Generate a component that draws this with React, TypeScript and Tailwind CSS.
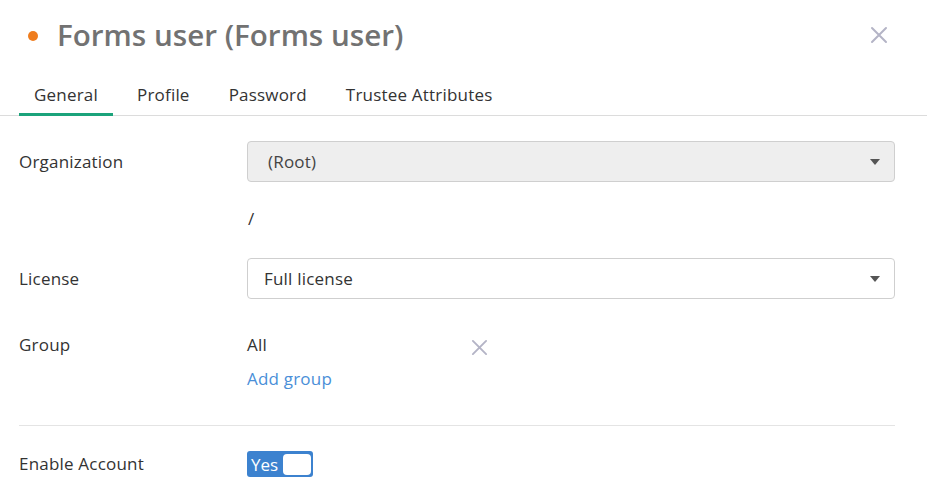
import React from "react";

const font = { fontFamily: '"Open Sans", "Noto Sans", sans-serif' };

function Caret() {
  return (
    <svg width="10" height="6" viewBox="0 0 10 6" className="shrink-0">
      <path d="M0 0h10L5 6z" fill="#555" />
    </svg>
  );
}

function Cross({ size, color }: { size: number; color: string }) {
  return (
    <svg width={size} height={size} viewBox="0 0 18 18" className="shrink-0">
      <path d="M2 2l14 14M16 2L2 16" stroke={color} strokeWidth="2" strokeLinecap="round" />
    </svg>
  );
}

const tabs = ["General", "Profile", "Password", "Trustee Attributes"];

export default function App() {
  return (
    <div className="w-[927px] h-[495px] bg-white overflow-hidden text-[#333] tracking-[0.2px]" style={font}>
      <div className="h-[70px] flex items-center pl-[28px] pr-[39px]">
        <span className="w-[10px] h-[10px] rounded-full bg-[#ef7d1e] mt-[1px]" />
        <h1 className="ml-[19px] text-[29.6px] leading-[40px] font-semibold text-[#727272] flex-1 tracking-normal">
          Forms user (Forms user)
        </h1>
        <Cross size={18} color="#b4b4c6" />
      </div>

      <div className="mt-[8px] flex border-b border-[#dcdcdc] pl-[19px]">
        {tabs.map((t, i) => (
          <div
            key={t}
            className={`px-[15px] mr-[9px] pt-[6px] pb-[7px] -mb-px text-[17px] leading-[22px] border-b-[3px] ${
              i === 0 ? "border-[#1ba37b]" : "border-transparent"
            }`}
          >
            {t}
          </div>
        ))}
      </div>

      <div className="pl-[19px] pr-[32px] text-[17px] leading-[22px]">
        <div className="mt-[25px] grid grid-cols-[228px_1fr] items-center">
          <span>Organization</span>
          <div className="h-[41px] rounded-[4px] border border-[#cfcfcf] bg-[#eeeeee] flex items-center pl-[20px] pr-[14px]">
            <span className="flex-1 text-[#444]">(Root)</span>
            <Caret />
          </div>
        </div>

        <div className="mt-[26px] grid grid-cols-[228px_1fr]">
          <span />
          <span className="pl-px">/</span>
        </div>

        <div className="mt-[28px] grid grid-cols-[228px_1fr] items-center">
          <span>License</span>
          <div className="h-[41px] rounded-[4px] border border-[#cfcfcf] bg-white flex items-center pl-[16px] pr-[14px]">
            <span className="flex-1">Full license</span>
            <Caret />
          </div>
        </div>

        <div className="mt-[35px] grid grid-cols-[228px_1fr]">
          <span>Group</span>
          <div className="flex flex-col">
            <div className="flex items-center">
              <span className="w-[224px]">All</span>
              <span className="mt-[5px]">
                <Cross size={17} color="#b4b4c6" />
              </span>
            </div>
            <span className="mt-[12px] text-[#4a8fd8]">Add group</span>
          </div>
        </div>

        <div className="mt-[35px] border-t border-[#e4e4e4]" />

        <div className="mt-[25px] grid grid-cols-[228px_1fr] items-center">
          <span>Enable Account</span>
          <div className="w-[66px] h-[26px] rounded-[3px] bg-[#3c82cf] flex items-center pl-[4px] pr-[2px]">
            <span className="text-white text-[17px] leading-none flex-1 tracking-normal">Yes</span>
            <span className="w-[28px] h-[21px] rounded-[4px] bg-white" />
          </div>
        </div>
      </div>
    </div>
  );
}
